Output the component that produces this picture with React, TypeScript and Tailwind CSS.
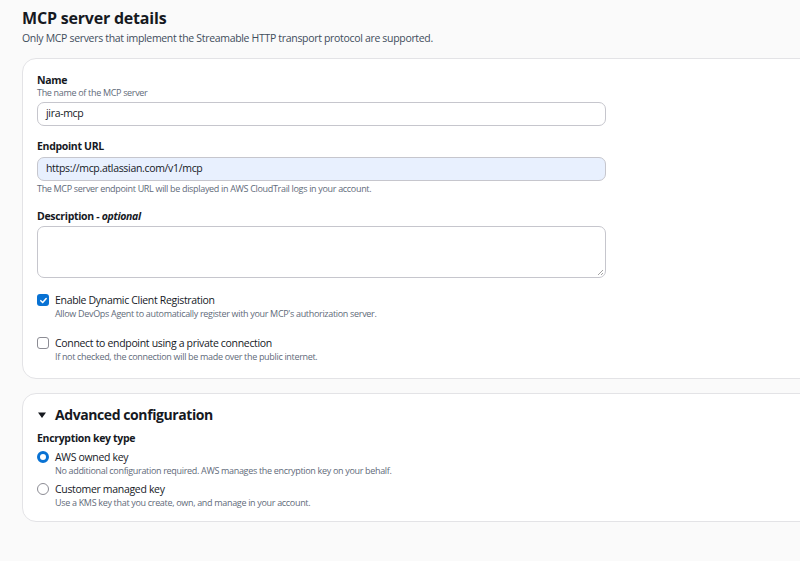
import React from "react";

const font = { fontFamily: '"Open Sans", "Noto Sans", Arial, sans-serif' };

function Field({
  label,
  hint,
  children,
  after,
  gap = "mt-[3px]",
}: {
  label: React.ReactNode;
  hint?: string;
  children: React.ReactNode;
  after?: string;
  gap?: string;
}) {
  return (
    <div className="flex flex-col">
      <div className="text-[10.5px] font-bold leading-[14px] text-[#16191f]">{label}</div>
      {hint && <div className="text-[9px] leading-[12px] text-[#5f6b7a]">{hint}</div>}
      <div className={gap}>{children}</div>
      {after && <div className="mt-[1px] text-[9px] leading-[13px] text-[#5f6b7a]">{after}</div>}
    </div>
  );
}

function Check({ checked, label, hint }: { checked: boolean; label: string; hint: string }) {
  return (
    <div className="flex items-start gap-[6px]">
      <div
        className={
          checked
            ? "mt-[1px] flex h-[12px] w-[12px] items-center justify-center rounded-[3px] bg-[#0972d3]"
            : "mt-[1px] h-[12px] w-[12px] rounded-[3px] border-[1.5px] border-[#8c8c94] bg-white"
        }
      >
        {checked && (
          <svg width="9" height="9" viewBox="0 0 10 10" fill="none">
            <path d="M2 5.2 L4.1 7.3 L8 2.8" stroke="white" strokeWidth="1.7" strokeLinecap="round" strokeLinejoin="round" />
          </svg>
        )}
      </div>
      <div className="flex flex-col">
        <div className="text-[10.5px] leading-[14px] text-[#16191f]">{label}</div>
        <div className="text-[9px] leading-[13px] text-[#5f6b7a]">{hint}</div>
      </div>
    </div>
  );
}

function Radio({ checked, label, hint }: { checked: boolean; label: string; hint: string }) {
  return (
    <div className="flex items-start gap-[6px]">
      <div
        className={
          checked
            ? "mt-[1px] h-[12px] w-[12px] rounded-full border-[3.5px] border-[#0972d3] bg-white"
            : "mt-[1px] h-[12px] w-[12px] rounded-full border-[1.5px] border-[#8c8c94] bg-white"
        }
      />
      <div className="flex flex-col">
        <div className="text-[10.5px] leading-[14px] text-[#16191f]">{label}</div>
        <div className="text-[9px] leading-[13px] text-[#5f6b7a]">{hint}</div>
      </div>
    </div>
  );
}

export default function App() {
  return (
    <div className="min-h-[561px] w-[800px] overflow-hidden bg-[#fafafa] tracking-[-0.02em]" style={font}>
      <div className="pl-[22px] pt-[6px]">
        <h1 className="text-[16px] font-bold leading-[24px] tracking-[-0.2px] text-[#16191f]">MCP server details</h1>
        <p className="text-[10.5px] leading-[16px] text-[#414d5c]">
          Only MCP servers that implement the Streamable HTTP transport protocol are supported.
        </p>

        <div className="mt-[12px] w-[820px] rounded-[14px] border border-[#e3e3e6] bg-white pb-[15px] pl-[14px] pr-[200px] pt-[14px]">
          <div className="flex w-[569px] flex-col gap-[13px]">
            <Field label="Name" hint="The name of the MCP server">
              <div className="flex h-[24px] items-center rounded-[7px] border border-[#c6c6cd] bg-white px-[8px] text-[10.5px] text-[#16191f]">
                jira-mcp
              </div>
            </Field>
            <Field
              label="Endpoint URL"
              gap="mt-[4px]"
              after="The MCP server endpoint URL will be displayed in AWS CloudTrail logs in your account."
            >
              <div className="flex h-[24px] items-center rounded-[7px] border border-[#c6c6cd] bg-[#e8f0fe] px-[8px] text-[10.5px] text-[#16191f]">
                https://mcp.atlassian.com/v1/mcp
              </div>
            </Field>
            <div className="mt-[1px]">
              <Field
                label={
                  <span>
                    Description - <i>optional</i>
                  </span>
                }
              >
                <div className="relative h-[52px] rounded-[7px] border border-[#c6c6cd] bg-white">
                  <svg className="absolute bottom-[1px] right-[1px]" width="8" height="8" viewBox="0 0 8 8">
                    <path d="M7 2 L2 7 M7 5 L5 7" stroke="#9a9a9a" strokeWidth="0.9" />
                  </svg>
                </div>
              </Field>
            </div>
            <div className="mt-[2px] flex flex-col gap-[16px]">
              <Check
                checked
                label="Enable Dynamic Client Registration"
                hint="Allow DevOps Agent to automatically register with your MCP's authorization server."
              />
              <Check
                checked={false}
                label="Connect to endpoint using a private connection"
                hint="If not checked, the connection will be made over the public internet."
              />
            </div>
          </div>
        </div>

        <div className="mt-[14px] w-[820px] rounded-[14px] border border-[#e3e3e6] bg-white pb-[12px] pl-[14px] pt-[11px]">
          <div className="flex items-center gap-[8px]">
            <svg width="10" height="10" viewBox="0 0 10 10">
              <path d="M1 2.5 H9 L5 8 Z" fill="#16191f" />
            </svg>
            <div className="text-[14px] font-bold leading-[20px] tracking-[-0.03em] text-[#16191f]">Advanced configuration</div>
          </div>
          <div className="mt-[5px] text-[10.5px] font-bold leading-[16px] text-[#16191f]">Encryption key type</div>
          <div className="mt-[4px] flex flex-col gap-[5px]">
            <Radio
              checked
              label="AWS owned key"
              hint="No additional configuration required. AWS manages the encryption key on your behalf."
            />
            <Radio
              checked={false}
              label="Customer managed key"
              hint="Use a KMS key that you create, own, and manage in your account."
            />
          </div>
        </div>
      </div>
    </div>
  );
}
